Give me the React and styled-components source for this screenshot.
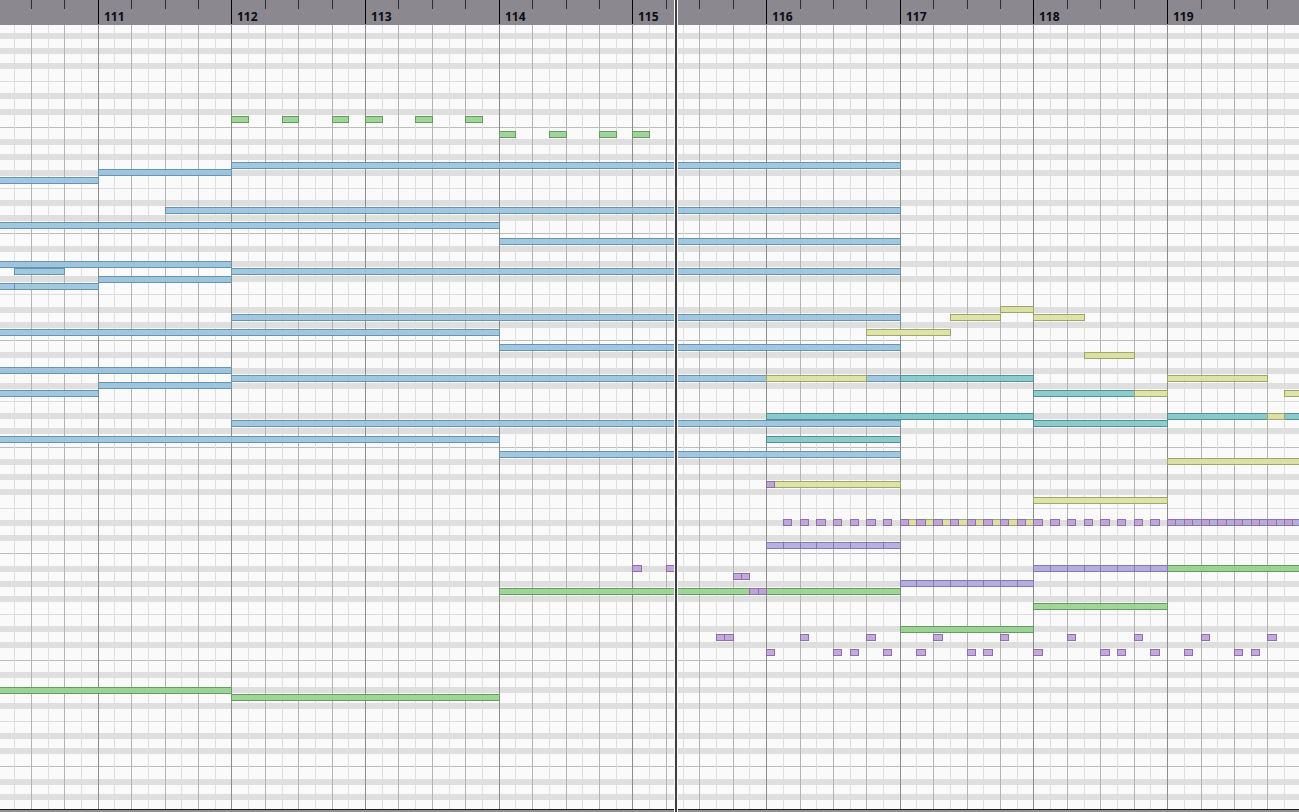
import { useEffect, useState } from "react";
import styled, { createGlobalStyle } from "styled-components";

// time is counted in eighths of a bar, 0 is the start of bar 111
const FIRST_BAR = 111;
const EIGHTH = 16.71;
const ORIGIN_X = 98.2;
const ROW = 7.613;
const ORIGIN_Y = 102;

const xOf = (t) => Math.floor(ORIGIN_X + EIGHTH * t);
const yOf = (row) => ORIGIN_Y + ROW * row;

const COLORS = {
    blue: ["#98c2dee6", "#6795b0"],
    green: ["#96d08fe6", "#659c60"],
    yellow: ["#dae19de6", "#a0a56c"],
    teal: ["#80c6c8e6", "#529294"],
    purple: ["#bda0dbe6", "#8c72a6"],
    violet: ["#b0a7dfe6", "#837bb0"],
};

// [row, start, end]
const LONG_NOTES = {
    blue: [
        [7, -8, 0], [6, 0, 8], [5, 8, 48],
        [11, 4, 48], [13, -8, 24], [15, 24, 48],
        [18, -8, 8], [19, -5, -2], [19, 8, 48], [20, 0, 8],
        [21, -8, -5], [21, -5, 0],
        [25, 8, 48], [27, -8, 24], [29, 24, 48],
        [32, -8, 8], [33, 8, 40], [33, 46, 48], [34, 0, 8], [35, -8, 0],
        [39, 8, 48], [41, -8, 24], [43, 24, 48],
    ],
    green: [
        [-1, 8, 9], [-1, 11, 12], [-1, 14, 15], [-1, 16, 17], [-1, 19, 20], [-1, 22, 23],
        [1, 24, 25], [1, 27, 28], [1, 30, 31], [1, 32, 33],
        [58, 64, 80], [61, 24, 48], [63, 56, 64], [66, 48, 56],
        [74, -8, 8], [75, 8, 24],
    ],
    teal: [
        [33, 48, 56], [35, 56, 62], [38, 40, 56], [38, 64, 70], [38, 71, 80],
        [39, 56, 64], [41, 40, 48],
    ],
    yellow: [
        [27, 46, 51], [25, 51, 54], [24, 54, 56], [25, 56, 59], [30, 59, 62],
        [33, 40, 46], [33, 64, 70], [35, 62, 64], [35, 71, 80], [38, 70, 71],
        [44, 64, 80], [47, 40, 48], [49, 56, 64], [52, 48, 56],
    ],
    violet: [[52, 64, 80]],
};

// rows of repeated notes, one per eighth: [row, from, to]
const REPEATED = [[55, 40, 48], [60, 48, 56], [58, 56, 64]];

// half-length notes: row and the times they start at
const SHORT_NOTES = [
    [47, [40]],
    [52, range(41, 80)],
    [58, [32, 34]],
    [59, [38, 38.5]],
    [61, [39, 39.5]],
    [67, [37, 37.5, 42, 46, 50, 54, 58, 62, 66, 70]],
    [69, [40, 44, 45, 47, 49, 52, 53, 56, 60, 61, 63, 65, 68, 69]],
];

function range(from, to, step = 1) {
    const list = [];
    for (let i = from; i < to; i += step) list.push(i);
    return list;
}

const notes = [];
Object.entries(LONG_NOTES).forEach(([color, list]) => {
    list.forEach(([row, start, end]) => notes.push({ color, row, start, end }));
});
REPEATED.forEach(([row, from, to]) => {
    range(from, to).forEach((t) => notes.push({ color: "violet", row, start: t, end: t + 1 }));
});
SHORT_NOTES.forEach(([row, times]) => {
    times.forEach((t) => notes.push({ color: "purple", row, start: t, end: t + 0.5 }));
});

// black keys are 6px stripes, E/F and B/C are split by a 1px line
function buildLanes() {
    const lanes = [];
    let bottom = 0;
    range(-12, 260, 2).forEach((row) => {
        const key = (row + 14) % 14;
        const kind = key === 0 ? "octave" : key === 8 ? "split" : "black";
        const height = kind === "black" ? 6 : 1;
        const top = Math.floor(yOf(row) + (kind === "black" ? -2.55 : 0.4));
        lanes.push({ row, kind, height, gap: top - bottom });
        bottom = top + height;
    });
    return lanes;
}

const lanes = buildLanes();

// first time that lies past the right edge of the window
function useLastTime() {
    const [width, setWidth] = useState(window.innerWidth);

    useEffect(() => {
        const onResize = () => setWidth(window.innerWidth);
        window.addEventListener("resize", onResize);
        return () => window.removeEventListener("resize", onResize);
    }, []);

    return Math.ceil((width - ORIGIN_X) / EIGHTH);
}

function Ruler({ lastTime }) {
    return (
        <RulerBar>
            {range(-4, lastTime, 2).map((t) => {
                const isBar = t % 8 === 0;
                return (
                    <Beat key={t} style={{ width: xOf(t + 2) - xOf(t) }}>
                        <Tick $bar={isBar} />
                        {isBar && <BarNumber>{FIRST_BAR + t / 8}</BarNumber>}
                    </Beat>
                );
            })}
        </RulerBar>
    );
}

function Grid({ lastTime }) {
    return (
        <>
            <Lanes>
                {lanes.map((l) => (
                    <Lane key={l.row} $kind={l.kind} style={{ height: l.height, marginTop: l.gap }} />
                ))}
            </Lanes>
            <Columns>
                {range(-5, lastTime).map((t) => (
                    <Column
                        key={t}
                        $kind={t % 8 === 0 ? "bar" : t % 2 === 0 ? "quarter" : "eighth"}
                        style={{ width: xOf(t + 1) - xOf(t) }}
                    />
                ))}
            </Columns>
        </>
    );
}

export default function App() {
    const lastTime = useLastTime();

    return (
        <>
            <GlobalStyle />
            <Editor>
                <Ruler lastTime={lastTime} />
                <Roll>
                    <Grid lastTime={lastTime} />
                    <Notes>
                        {notes.map((n, i) => (
                            <Note
                                key={i}
                                $color={n.color}
                                style={{
                                    left: xOf(n.start),
                                    top: Math.round(yOf(n.row) - 3.5),
                                    width: xOf(n.end) - xOf(n.start) + 1,
                                }}
                            />
                        ))}
                    </Notes>
                </Roll>
                <BottomEdge />
                <Playhead />
            </Editor>
        </>
    );
}

const GlobalStyle = createGlobalStyle`
    * {
        box-sizing: border-box;
    }
    body {
        margin: 0;
        overflow: hidden;
        font-family: "Open Sans", "Noto Sans", sans-serif;
    }
`

const Editor = styled.main`
    position: relative;
    display: flex;
    flex-direction: column;
    width: 100%;
    height: 100vh;
    overflow: hidden;
    background-color: #fafafa;
`

const RulerBar = styled.header`
    display: flex;
    flex: none;
    height: 25px;
    padding-left: 31px;
    overflow: hidden;
    background-color: #8b898f;
`

const Beat = styled.div`
    display: flex;
    flex: none;
    align-items: flex-start;
`

const Tick = styled.div`
    flex: none;
    width: 1px;
    height: ${(p) => (p.$bar ? "24px" : "9px")};
    background-color: ${(p) => (p.$bar ? "#000000" : "#2e2d33")};
`

const BarNumber = styled.span`
    padding: 9px 0 0 5px;
    font-size: 12px;
    font-weight: 700;
    line-height: 16px;
    color: #0c0c12;
`

const Roll = styled.section`
    display: grid;
    flex: 1;
    min-height: 0;
    overflow: hidden;
    grid-template: minmax(0, 1fr) / minmax(0, 1fr);

    > * {
        grid-area: 1 / 1;
    }
`

const Lanes = styled.div`
    display: flex;
    flex-direction: column;
`

const laneColors = { black: "#dfdfe0", split: "#dddddd", octave: "#bcbcbc" };

const Lane = styled.div`
    flex: none;
    background-color: ${(p) => laneColors[p.$kind]};
`

const Columns = styled.div`
    display: flex;
    padding-left: 14px;
`

const columnColors = { bar: "#8c8c8c", quarter: "#b4b4b4", eighth: "#dedede" };

const Column = styled.div`
    flex: none;
    border-left: 1px solid ${(p) => columnColors[p.$kind]};
`

const Notes = styled.div`
    position: relative;
`

const Note = styled.div`
    position: absolute;
    height: 7px;
    border: 1px solid ${(p) => COLORS[p.$color][1]};
    background-color: ${(p) => COLORS[p.$color][0]};
    background-clip: padding-box;
`

const BottomEdge = styled.footer`
    flex: none;
    height: 3px;
    border-top: 1px solid #1c1c1c;
    background-color: #929292;
`

const Playhead = styled.div`
    position: absolute;
    top: 0;
    bottom: 0;
    left: 674px;
    width: 4px;
    border: solid #fafafa;
    border-width: 0 1px;
    background-color: #3e3e42;
`
